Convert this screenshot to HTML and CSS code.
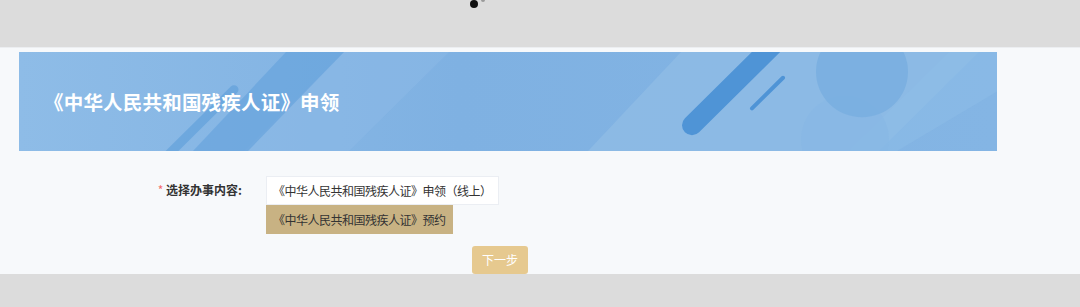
FILE: index.html
```html
<!DOCTYPE html>
<html lang="zh-CN">
<head>
<meta charset="utf-8">
<title>《中华人民共和国残疾人证》申领</title>
<link rel="stylesheet" href="styles.css">
</head>
<body>
<div class="topbar">
  <span class="spinner-dot"></span>
  <span class="spinner-dot small"></span>
</div>
<main class="page">
  <section class="banner">
    <svg class="banner-art" viewBox="0 0 978 100" preserveAspectRatio="none" aria-hidden="true">
      <defs>
        <linearGradient id="bg" x1="0" y1="0" x2="1" y2="0">
          <stop offset="0" stop-color="#8ebce7"/>
          <stop offset="0.45" stop-color="#7fb1e2"/>
          <stop offset="1" stop-color="#84b5e4"/>
        </linearGradient>
      </defs>
      <rect x="0" y="0" width="978" height="100" fill="url(#bg)"/>
      <polygon points="325,0 430,0 330,100 225,100" fill="#8dbbe6" opacity="0.45"/>
      <polygon points="267,0 325,0 229,100 174,100" fill="#5e9fdb" opacity="0.55"/>
      <polygon points="662,0 960,0 860,100 569,100" fill="#8fbbe5" opacity="0.8"/>
      <polygon points="930,0 978,0 978,40 878,100 830,100" fill="#8ebde7" opacity="0.5"/>
      <circle cx="826" cy="88" r="44" fill="#87b7e4" opacity="0.6"/>
      <circle cx="843" cy="20" r="46" fill="#7aafe0" opacity="0.9"/>
      <line x1="215" y1="38" x2="140" y2="113" stroke="#5499d8" stroke-width="9" stroke-linecap="round" opacity="0.5"/>
      <line x1="673" y1="74" x2="763" y2="-16" stroke="#4f94d6" stroke-width="20" stroke-linecap="round"/>
      <line x1="764" y1="26" x2="733" y2="57" stroke="#4f94d6" stroke-width="4" stroke-linecap="round"/>
    </svg>
    <h1 class="banner-title">《中华人民共和国残疾人证》申领</h1>
  </section>

  <div class="form-row">
    <div class="form-label"><span class="required">*</span> 选择办事内容:</div>
    <div class="options">
      <div class="option">《中华人民共和国残疾人证》申领（线上）</div>
      <div class="option active">《中华人民共和国残疾人证》预约</div>
    </div>
  </div>

  <div class="actions">
    <button class="next-btn" type="button">下一步</button>
  </div>
</main>
<div class="footer"></div>
</body>
</html>
```

FILE: styles.css
```css
* {
  box-sizing: border-box;
}

html, body {
  margin: 0;
  padding: 0;
}

body {
  width: 1080px;
  height: 307px;
  overflow: hidden;
  background: #dcdcdc;
  font-family: "Noto Sans CJK SC", "Noto Sans", sans-serif;
  color: #333;
}

.topbar {
  position: relative;
  height: 47px;
  background: #dcdcdc;
}

.spinner-dot {
  position: absolute;
  left: 470px;
  top: 0;
  width: 8px;
  height: 8px;
  border-radius: 50%;
  background: #111;
}

.spinner-dot.small {
  left: 481px;
  top: -2px;
  width: 4px;
  height: 4px;
  background: #9a9a9a;
}

.page {
  height: 227px;
  background: #f7f9fb;
  padding-top: 4px;
  border-top: 1px solid #eceef1;
}

.banner {
  position: relative;
  margin-left: 19px;
  width: 978px;
  height: 99px;
  display: flex;
  align-items: center;
  overflow: hidden;
}

.banner-art {
  position: absolute;
  left: 0;
  top: 0;
  width: 100%;
  height: 100%;
}

.banner-title {
  position: relative;
  margin: 0 0 0 25px;
  font-size: 19.5px;
  font-weight: 700;
  color: #fff;
  line-height: 1;
  letter-spacing: 0.2px;
}

.form-row {
  display: flex;
  align-items: flex-start;
  margin-top: 25px;
}

.form-label {
  width: 242px;
  margin-right: 24px;
  text-align: right;
  font-size: 12px;
  font-weight: 700;
  line-height: 28px;
  color: #333;
}

.required {
  color: #f56c6c;
  font-weight: 400;
}

.options {
  display: flex;
  flex-direction: column;
  align-items: flex-start;
}

.option {
  height: 29px;
  padding: 0 6px;
  font-size: 12px;
  letter-spacing: -0.5px;
  line-height: 28px;
  color: #333;
  background: #fff;
  border: 1px solid #ebeef3;
  white-space: nowrap;
}

.option.active {
  background: #c8b283;
  border-color: #c8b283;
}

.actions {
  padding-left: 472px;
  margin-top: 12px;
}

.next-btn {
  width: 56px;
  height: 28px;
  padding: 0;
  border: none;
  border-radius: 3px;
  background: #e6c98f;
  color: #fff;
  font-family: "Noto Sans CJK SC", "Noto Sans", sans-serif;
  font-size: 12px;
  line-height: 28px;
  cursor: pointer;
}

.footer {
  height: 33px;
  background: #dcdcdc;
}
```
